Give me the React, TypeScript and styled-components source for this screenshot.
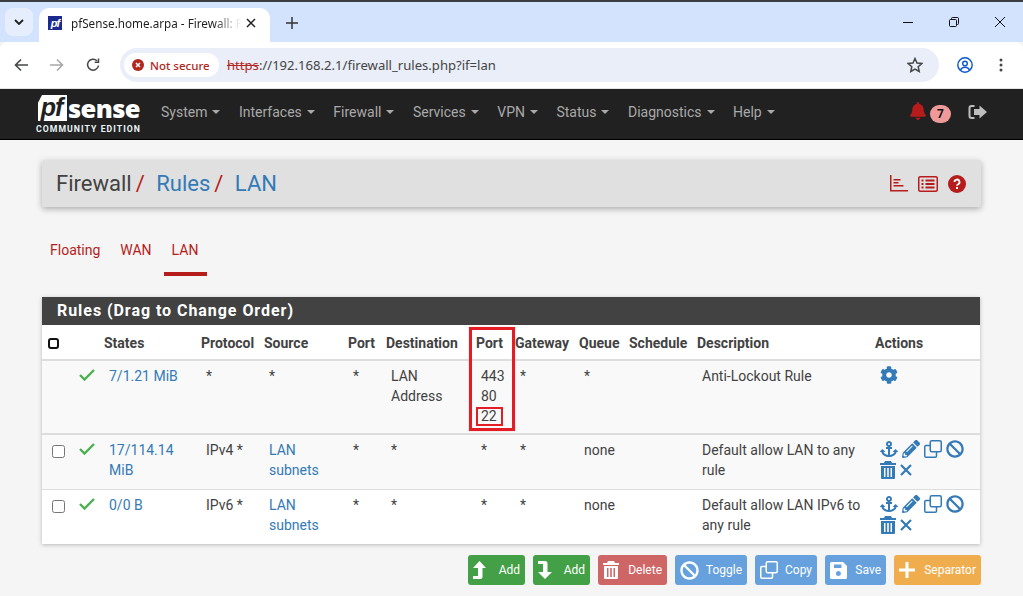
import React from "react";
import styled, { createGlobalStyle } from "styled-components";
import { FaAnchor, FaBan, FaBell, FaCog, FaPencilAlt } from "react-icons/fa";

const Global = createGlobalStyle`
  html, body { margin: 0; padding: 0; background: #f5f5f5; }
  body { font-family: Roboto, "Liberation Sans", sans-serif; font-size: 14px; color: #424242; }
  #root { height: 596px; overflow: hidden; }
  * { box-sizing: border-box; }
`;

const Frame = styled.div`height: 596px; overflow: hidden; display: flex; flex-direction: column;`;
const TopEdge = styled.div`height: 2px; background: #3a3d40; flex: none;`;
const TabStrip = styled.div`height: 40px; background: #d3e3fd; display: flex; align-items: flex-end; padding-left: 5px; flex: none;`;
const TabSwitcher = styled.div`width: 28px; height: 28px; margin-bottom: 6px; background: #e6eefd; border-radius: 8px; display: flex; align-items: center; justify-content: center;`;
const Tab = styled.div`width: 231px; height: 34px; margin-left: 6px; background: #fff; border-radius: 10px 10px 0 0; display: flex; align-items: center; padding: 0 8px 4px 9px; position: relative;`;
const Favicon = styled.div`width: 14px; height: 14px; background: #1b2a8f; color: #fff; font: italic 700 11px/14px "Liberation Sans", sans-serif; text-align: center; flex: none; letter-spacing: -1px;`;
const TabTitle = styled.div`
  margin-left: 9px; width: 170px; font: 11.7px "Noto Sans", sans-serif; color: #1f1f1f; white-space: nowrap; overflow: hidden;
  -webkit-mask-image: linear-gradient(90deg, #000 84%, transparent 100%);
  mask-image: linear-gradient(90deg, #000 84%, transparent 100%);
`;
const TabClose = styled.div`margin-left: 5px; display: flex;`;
const NewTab = styled.div`margin: 0 0 8px 13px; width: 18px; height: 18px; display: flex; align-items: center; justify-content: center; align-self: flex-end; position: relative; top: -2px;`;
const WindowControls = styled.div`margin-left: auto; display: flex; align-self: stretch; align-items: center; gap: 36px; padding: 0 18px 0 0;`;

const Toolbar = styled.div`height: 46px; background: #fff; border-radius: 8px 8px 0 0; display: flex; align-items: center; padding-left: 14px; flex: none;`;
const NavGlyphs = styled.div`display: flex; align-items: center; gap: 22px;`;
const Omnibox = styled.div`margin-left: 20px; width: 819px; height: 34px; background: #e9eef8; border-radius: 17px; display: flex; align-items: center; padding: 0 16px 0 4px;`;
const SecurityChip = styled.div`height: 24px; width: 95px; background: #fff; border-radius: 12px; display: flex; align-items: center; padding-left: 8px; gap: 6px; color: #b3261e; font: 500 11.5px "Noto Sans", sans-serif; white-space: nowrap;`;
const Url = styled.div`margin-left: 8px; font: 13.1px "Noto Sans", sans-serif; color: #444; white-space: nowrap;`;
const Scheme = styled.span`color: #b3261e; text-decoration: line-through;`;
const Star = styled.div`margin-left: auto; display: flex;`;
const ToolbarRight = styled.div`display: flex; align-items: center; margin-left: 18px; gap: 26px;`;

const Separator = styled.div`height: 1px; background: #e3e3e3; flex: none;`;
const Navbar = styled.div`height: 51px; background: #212121; border-bottom: 1px solid #000; display: flex; flex: none; position: relative;`;
const Logo = styled.div`width: 161px; flex: none; padding: 6px 0 0 38px; color: #fff;`;
const LogoTop = styled.div`display: flex; align-items: flex-end; height: 26px;`;
const LogoPf = styled.span`
  width: 29px; height: 26px; background: #fff; color: #212121; font: italic 700 25px/24px "Liberation Sans", sans-serif;
  clip-path: polygon(4px 0, 100% 0, 100% 100%, 0 100%, 0 30%); text-align: center; letter-spacing: -1px; padding-right: 2px;
`;
const LogoSense = styled.span`font: 800 25.500px/25px "Open Sans", sans-serif; letter-spacing: -0.6px; margin-left: 1px;`;
const LogoSub = styled.div`font: 700 8.7px/10px Roboto, sans-serif; letter-spacing: 1.05px; white-space: nowrap; margin: 3px 0 0 -2px; color: #e8f4f8;`;
const NavItems = styled.div`display: flex; align-items: center; gap: 18.500px; padding-bottom: 5px;`;
const NavItem = styled.div`color: #a9a9a9; font-size: 14px; display: flex; align-items: center; gap: 5px; white-space: nowrap;`;
const Caret = styled.span`width: 0; height: 0; border-left: 4px solid transparent; border-right: 4px solid transparent; border-top: 4px solid currentColor; margin-top: 1px;`;
const NavRight = styled.div`margin-left: auto; display: flex; align-items: center; padding: 0 36px 0 0;`;
const Badge = styled.span`width: 21px; height: 18px; border-radius: 9px; background: #ef9a9a; color: #111; font: 700 12px/18px Roboto, sans-serif; text-align: center; margin: 0 17px 0 3px;`;
const BellWrap = styled.span`display: flex; color: #b71c1c; font-size: 18px; margin-bottom: 6px;`;
const SignOutWrap = styled.span`display: flex; margin-bottom: 5px;`;

const Content = styled.div`flex: 1; padding: 20px 42px 0; position: relative;`;
const TitleBar = styled.div`
  width: 939px; height: 47px; background: #e0e0e0; border-radius: 2px; box-shadow: 0 2px 6px rgba(0,0,0,.3);
  display: flex; align-items: center; padding: 0 15px 0 14px; font-size: 22px; color: #424242;
`;
const Crumb = styled.span`color: #337ab7;`;
const Slash = styled.span`color: #b71c1c; margin: 0 11.500px 0 4px;`;
const TitleIcons = styled.div`margin-left: auto; display: flex; align-items: center; gap: 10px; color: #b71c1c;`;
const Tabs = styled.div`display: flex; margin-top: 33px; padding-left: 8px; height: 36px; gap: 20px;`;
const TabLink = styled.div<{ $active?: boolean }>`
  color: #b71c1c; font-size: 14px; line-height: 20px; position: relative;
  ${(p) => p.$active && `&::after { content: ""; position: absolute; left: -8px; right: -9px; bottom: 0; height: 4px; background: #b71c1c; }`}
`;
const Panel = styled.div`width: 938px; margin-top: 21px; background: #fff; box-shadow: 0 1px 4px rgba(0,0,0,.25); position: relative;`;
const PanelHead = styled.div`height: 28px; background: #424242; color: #fff; font: 700 16px/28px Roboto, sans-serif; letter-spacing: .95px; padding-left: 15px; white-space: nowrap;`;
const Row = styled.div<{ $h: number; $bg: string; $bw: number }>`
  display: grid; grid-template-columns: 37px 25px 97px 63px 84px 38px 90px 39px 64px 50px 68px 178px 105px;
  height: ${(p) => p.$h}px; background: ${(p) => p.$bg}; border-bottom: ${(p) => p.$bw}px solid #ddd;
`;
const Th = styled.div`font-weight: 700; font-size: 14px; line-height: 20px; padding-top: 8px; color: #424242; white-space: nowrap;`;
const Td = styled.div`padding: 5px 8px 0 5px; line-height: 20px; font-size: 14px; color: #424242;`;
const Link = styled.span`color: #337ab7;`;
const CheckBox = styled.input.attrs({ type: "checkbox" })`width: 13px; height: 13px; margin: 10px 0 0 10px; accent-color: #666;`;
const HeadBox = styled.span`display: block; width: 11px; height: 11px; margin: 5px 0 0 6px; border: 2px solid #111; border-radius: 3px;`;
const GreenCheck = styled.div`padding: 8px 0 0 0; line-height: 0;`;
const Actions = styled.div`display: flex; flex-wrap: wrap; width: 100px; padding: 5px 0 0 5px; color: #337ab7; gap: 3px 4px; align-content: flex-start; align-items: center; font-size: 18px;`;
const Mark = styled.span`display: inline-block; border: 2px solid #e31c25; padding: 0 4px 0 3px; line-height: 15px; margin-left: -5px; height: 19px;`;
const Annotation = styled.div`position: absolute; left: 427px; top: 30px; width: 46px; height: 104px; border: 3px solid #e31c25; box-shadow: 0 0 1px rgba(227,28,37,.4); pointer-events: none;`;

const ButtonBar = styled.div`width: 939px; display: flex; justify-content: flex-end; gap: 8px; margin-top: 11px;`;
const Btn = styled.div<{ $bg: string; $w: number }>`
  width: ${(p) => p.$w}px; height: 30px; border-radius: 3px; background: ${(p) => p.$bg}; color: #fff; font-size: 12px;
  display: flex; align-items: center; justify-content: space-between; padding: 0 5px; white-space: nowrap;
`;
const BtnIcon = styled.span`display: flex; font-size: 19px;`;

const Ico = styled.svg`display: block; flex: none;`;

const TrashIcon = () => (
  <Ico width="16" height="18" viewBox="0 0 16 18" fill="currentColor">
    <path d="M5 0h6l1 2h4v2H0V2h4zM1 5h14v12a1 1 0 0 1-1 1H2a1 1 0 0 1-1-1zM4 7v9h1.500V7zm3.200 0v9h1.600V7zm3.300 0v9H12V7z" fillRule="evenodd" />
  </Ico>
);
const CloneIcon = ({ s = 18 }: { s?: number }) => (
  <Ico width={s} height={s} viewBox="0 0 18 18" fill="none" stroke="currentColor" strokeWidth="1.500">
    <rect x="6.250" y=".75" width="11" height="11" rx="1.500" />
    <path d="M6 5.500H2A1.250 1.250 0 0 0 .75 6.750V16A1.250 1.250 0 0 0 2 17.250h9.250A1.250 1.250 0 0 0 12.500 16v-4" />
  </Ico>
);
const XIcon = () => (
  <Ico width="12" height="12" viewBox="0 0 12 12" fill="none" stroke="currentColor" strokeWidth="2.200"><path d="M1 1l10 10M11 1 1 11" /></Ico>
);
const GreenTick = () => (
  <Ico width="16" height="12" viewBox="0 0 16 12" fill="none" stroke="#4caf50" strokeWidth="2.400"><path d="M1 6l4.500 4.500L15 1" /></Ico>
);
const LevelUp = () => (
  <Ico width="13" height="18" viewBox="0 0 13 18" fill="currentColor"><path d="M6.500 0l6.500 7H9.500v8.500A2.500 2.500 0 0 1 7 18H0v-3h5V7H0z" /></Ico>
);
const LevelDown = () => (
  <Ico width="14" height="18" viewBox="0 0 14 18" fill="currentColor"><path d="M0 0h7a2.500 2.500 0 0 1 2.500 2.500V11H14l-7 7-7-7h5V3H0z" /></Ico>
);
const SaveIcon = () => (
  <Ico width="17" height="17" viewBox="0 0 17 17" fill="currentColor">
    <path fillRule="evenodd" d="M1.500 0H13l4 4v11.500a1.500 1.500 0 0 1-1.500 1.500h-14A1.500 1.500 0 0 1 0 15.500v-14A1.500 1.500 0 0 1 1.500 0zM4 2.500V6h7.500V2.500zM8.500 9a2.500 2.500 0 1 0 0 5 2.500 2.500 0 0 0 0-5z" />
  </Ico>
);
const PlusIcon = () => (
  <Ico width="16" height="16" viewBox="0 0 16 16" fill="none" stroke="currentColor" strokeWidth="3"><path d="M8 0v16M0 8h16" /></Ico>
);

const SignOut = () => (
  <Ico width="19" height="16" viewBox="0 0 19 16" fill="#bdbdbd">
    <path d="M6.500 1H3.500A3 3 0 0 0 .5 4v8a3 3 0 0 0 3 3h3v-2H3.500a1 1 0 0 1-1-1V4a1 1 0 0 1 1-1h3z" />
    <path d="M11.500 1.500 19 8l-7.500 6.500V11H6V5h5.500z" />
  </Ico>
);

const ChartIcon = () => (
  <Ico width="18" height="17" viewBox="0 0 18 17" fill="currentColor">
    <path d="M0 0h1.500v15H18v1.500H0z" /><path d="M3.500 4h7v1.500h-7zM3.500 7h5v1.500h-5zM3.500 10h10v1.500h-10z" />
  </Ico>
);
const ListIcon = () => (
  <Ico width="20" height="16" viewBox="0 0 20 16" fill="none" stroke="currentColor" strokeWidth="1.500">
    <rect x=".75" y=".75" width="18.500" height="14.500" rx="1.500" />
    <path d="M3.500 4.500h2M3.500 8h2M3.500 11.500h2M7.500 4.500h9M7.500 8h9M7.500 11.500h9" strokeWidth="2" />
  </Ico>
);
const HelpIcon = () => (
  <Ico width="18" height="18" viewBox="0 0 18 18">
    <circle cx="9" cy="9" r="9" fill="#b71c1c" />
    <path d="M6.500 7a2.500 2.500 0 1 1 3.700 2.200c-.8.400-1.200.8-1.200 1.600" fill="none" stroke="#fff" strokeWidth="1.800" />
    <rect x="8" y="12" width="2" height="2" fill="#fff" />
  </Ico>
);

const gray = "#444746";
const Chevron = () => (<Ico width="10" height="6" viewBox="0 0 10 6" fill="none" stroke="#1f1f1f" strokeWidth="1.800"><path d="M1 1l4 4 4-4" /></Ico>);
const Cross = () => (<Ico width="10" height="10" viewBox="0 0 10 10" fill="none" stroke="#222" strokeWidth="1.500"><path d="M1 1l8 8M9 1l-8 8" /></Ico>);
const Plus = () => (<Ico width="12" height="12" viewBox="0 0 12 12" fill="none" stroke="#333" strokeWidth="1.500"><path d="M6 0v12M0 6h12" /></Ico>);
const Minimize = () => (<Ico width="10" height="10" viewBox="0 0 10 10" stroke="#111"><path d="M0 5.500h10" /></Ico>);
const Restore = () => (<Ico width="10" height="10" viewBox="0 0 10 10" fill="none" stroke="#111"><rect x=".5" y="2.500" width="7" height="7" rx="1" /><path d="M2.500 2.500V1.500a1 1 0 0 1 1-1h5a1 1 0 0 1 1 1v5a1 1 0 0 1-1 1h-1" /></Ico>);
const CloseWin = () => (<Ico width="10" height="10" viewBox="0 0 10 10" stroke="#111"><path d="M0 0l10 10M10 0L0 10" /></Ico>);
const Back = ({ c }: { c: string }) => (<Ico width="14" height="14" viewBox="0 0 14 14" fill="none" stroke={c} strokeWidth="1.600"><path d="M14 7H1.500M7 1.500 1.500 7 7 12.500" /></Ico>);
const Forward = ({ c }: { c: string }) => (<Ico width="14" height="14" viewBox="0 0 14 14" fill="none" stroke={c} strokeWidth="1.600"><path d="M0 7h12.500M7 1.500 12.500 7 7 12.500" /></Ico>);
const Reload = () => (<Ico width="14" height="14" viewBox="0 0 14 14" fill="none" stroke={gray} strokeWidth="1.500"><path d="M12.500 7.500A5.500 5.500 0 1 1 11 2.800" /><path d="M12.500 .5v3.800H8.700" /></Ico>);
const Warn = () => (<Ico width="12" height="12" viewBox="0 0 12 12"><circle cx="6" cy="6" r="6" fill="#b3261e" /><path d="M4 4l4 4M8 4l-4 4" stroke="#fff" strokeWidth="1.500" /></Ico>);
const StarIcon = () => (<Ico width="16" height="16" viewBox="0 0 16 16" fill="none" stroke={gray} strokeWidth="1.500"><path d="M8 1.500 10 6l4.800.5-3.600 3.200 1 4.800L8 12l-4.200 2.500 1-4.800L1.200 6.500 6 6z" /></Ico>);
const Profile = () => (<Ico width="16" height="16" viewBox="0 0 16 16" fill="none" stroke="#0b57d0" strokeWidth="1.400"><circle cx="8" cy="8" r="7.200" /><circle cx="8" cy="6.500" r="2.300" /><path d="M3.500 13c1-2 2.500-2.800 4.500-2.800s3.500.8 4.500 2.800" /></Ico>);
const Dots = () => (<Ico width="4" height="14" viewBox="0 0 4 14" fill={gray}><circle cx="2" cy="2" r="1.500" /><circle cx="2" cy="7" r="1.500" /><circle cx="2" cy="12" r="1.500" /></Ico>);

const navLabels = ["System", "Interfaces", "Firewall", "Services", "VPN", "Status", "Diagnostics", "Help"];

const ActionIcons = () => (
  <Actions>
    <FaAnchor /><FaPencilAlt /><CloneIcon /><FaBan /><TrashIcon /><XIcon />
  </Actions>
);

const cols = ["", "", "States", "Protocol", "Source", "Port", "Destination", "Port", "Gateway", "Queue", "Schedule", "Description", "Actions"];

export default function App() {
  return (
    <Frame>
      <Global />
      <TopEdge />
      <TabStrip>
        <TabSwitcher><Chevron /></TabSwitcher>
        <Tab>
          <Favicon>pf</Favicon>
          <TabTitle>pfSense.home.arpa - Firewall: Rules / LAN</TabTitle>
          <TabClose><Cross /></TabClose>
        </Tab>
        <NewTab><Plus /></NewTab>
        <WindowControls><Minimize /><Restore /><CloseWin /></WindowControls>
      </TabStrip>
      <Toolbar>
        <NavGlyphs><Back c={gray} /><Forward c="#a8a8a8" /><Reload /></NavGlyphs>
        <Omnibox>
          <SecurityChip><Warn />Not secure</SecurityChip>
          <Url><Scheme>https</Scheme>://192.168.2.1/firewall_rules.php?if=lan</Url>
          <Star><StarIcon /></Star>
        </Omnibox>
        <ToolbarRight><Profile /><Dots /></ToolbarRight>
      </Toolbar>
      <Separator />
      <Navbar>
        <Logo>
          <LogoTop><LogoPf>pf</LogoPf><LogoSense>sense</LogoSense></LogoTop>
          <LogoSub>COMMUNITY EDITION</LogoSub>
        </Logo>
        <NavItems>
          {navLabels.map((l) => (<NavItem key={l}>{l}<Caret /></NavItem>))}
        </NavItems>
        <NavRight>
          <BellWrap><FaBell /></BellWrap>
          <Badge>7</Badge>
          <SignOutWrap><SignOut /></SignOutWrap>
        </NavRight>
      </Navbar>
      <Content>
        <TitleBar>
          Firewall<Slash>/</Slash><Crumb>Rules</Crumb><Slash>/</Slash><Crumb>LAN</Crumb>
          <TitleIcons><ChartIcon /><ListIcon /><HelpIcon /></TitleIcons>
        </TitleBar>
        <Tabs>
          <TabLink>Floating</TabLink>
          <TabLink>WAN</TabLink>
          <TabLink $active>LAN</TabLink>
        </Tabs>
        <Panel>
          <PanelHead>Rules (Drag to Change Order)</PanelHead>
          <Row $h={36} $bg="#fff" $bw={2}>
            {cols.map((c, i) => (<Th key={i}>{i === 0 ? <HeadBox /> : c}</Th>))}
          </Row>
          <Row $h={74} $bg="#f9f9f9" $bw={2}>
            <Td />
            <GreenCheck><GreenTick /></GreenCheck>
            <Td><Link>7/1.21 MiB</Link></Td>
            <Td>*</Td>
            <Td>*</Td>
            <Td>*</Td>
            <Td>LAN Address</Td>
            <Td>443<br />80<br /><Mark>22</Mark></Td>
            <Td>*</Td>
            <Td>*</Td>
            <Td />
            <Td>Anti-Lockout Rule</Td>
            <Actions><FaCog /></Actions>
          </Row>
          <Row $h={55} $bg="#f9f9f9" $bw={1}>
            <div><CheckBox readOnly /></div>
            <GreenCheck><GreenTick /></GreenCheck>
            <Td><Link>17/114.14 MiB</Link></Td>
            <Td>IPv4 *</Td>
            <Td><Link>LAN subnets</Link></Td>
            <Td>*</Td>
            <Td>*</Td>
            <Td>*</Td>
            <Td>*</Td>
            <Td>none</Td>
            <Td />
            <Td>Default allow LAN to any rule</Td>
            <ActionIcons />
          </Row>
          <Row $h={54} $bg="#fff" $bw={0}>
            <div><CheckBox readOnly /></div>
            <GreenCheck><GreenTick /></GreenCheck>
            <Td><Link>0/0 B</Link></Td>
            <Td>IPv6 *</Td>
            <Td><Link>LAN subnets</Link></Td>
            <Td>*</Td>
            <Td>*</Td>
            <Td>*</Td>
            <Td>*</Td>
            <Td>none</Td>
            <Td />
            <Td>Default allow LAN IPv6 to any rule</Td>
            <ActionIcons />
          </Row>
          <Annotation />
        </Panel>
        <ButtonBar>
          <Btn $bg="#43a047" $w={57}><BtnIcon><LevelUp /></BtnIcon>Add</Btn>
          <Btn $bg="#43a047" $w={57}><BtnIcon><LevelDown /></BtnIcon>Add</Btn>
          <Btn $bg="#cf6666" $w={69}><BtnIcon><TrashIcon /></BtnIcon>Delete</Btn>
          <Btn $bg="#66a1dd" $w={72}><BtnIcon><FaBan /></BtnIcon>Toggle</Btn>
          <Btn $bg="#66a1dd" $w={62}><BtnIcon><CloneIcon /></BtnIcon>Copy</Btn>
          <Btn $bg="#66a1dd" $w={61}><BtnIcon><SaveIcon /></BtnIcon>Save</Btn>
          <Btn $bg="#f0ad4e" $w={87}><BtnIcon><PlusIcon /></BtnIcon>Separator</Btn>
        </ButtonBar>
      </Content>
    </Frame>
  );
}
